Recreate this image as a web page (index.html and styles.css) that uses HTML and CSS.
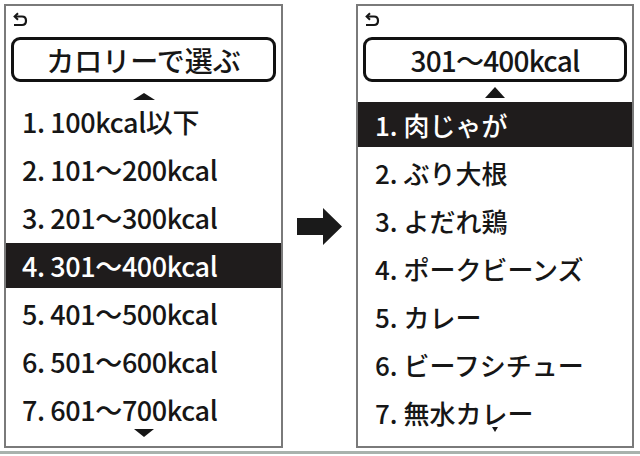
FILE: index.html
```html
<!DOCTYPE html>
<html lang="ja">
<head>
<meta charset="utf-8">
<title>カロリーで選ぶ</title>
<link rel="stylesheet" href="styles.css">
</head>
<body>
<div class="screen">
  <section class="panel">
    <div class="back">
      <svg width="16" height="15" viewBox="0 0 16 15"><path d="M3 4.5 H10 Q14 4.5 14 8.75 Q14 13 10 13 H2" fill="none" stroke="#161616" stroke-width="2.2"/><path d="M6 1.2 L2.6 4.5 L6 7.8" fill="none" stroke="#161616" stroke-width="2"/></svg>
    </div>
    <div class="title">カロリーで選ぶ</div>
    <div class="up"><span class="tri-up wide"></span></div>
    <ol class="list">
      <li>1. 100kcal以下</li>
      <li>2. 101～200kcal</li>
      <li>3. 201～300kcal</li>
      <li class="sel">4. 301～400kcal</li>
      <li>5. 401～500kcal</li>
      <li>6. 501～600kcal</li>
      <li>7. 601～700kcal</li>
    </ol>
    <div class="down"><span class="tri-down big"></span></div>
  </section>

  <div class="arrow">
    <svg width="45" height="37" viewBox="0 0 45 37"><polygon points="0,10 26,10 26,0 45,18.5 26,37 26,27 0,27" fill="#1a1a1a"/></svg>
  </div>

  <section class="panel">
    <div class="back">
      <svg width="16" height="15" viewBox="0 0 16 15"><path d="M3 4.5 H10 Q14 4.5 14 8.75 Q14 13 10 13 H2" fill="none" stroke="#161616" stroke-width="2.2"/><path d="M6 1.2 L2.6 4.5 L6 7.8" fill="none" stroke="#161616" stroke-width="2"/></svg>
    </div>
    <div class="title title-r">301～400kcal</div>
    <div class="up up-r"><span class="tri-up tall"></span></div>
    <ol class="list list-r">
      <li class="sel">1. 肉じゃが</li>
      <li>2. ぶり大根</li>
      <li>3. よだれ鶏</li>
      <li>4. ポークビーンズ</li>
      <li>5. カレー</li>
      <li>6. ビーフシチュー</li>
      <li>7. 無水カレー</li>
    </ol>
    <div class="down down-r"><span class="tri-down small"></span></div>
  </section>
</div>
<div class="rule"></div>
</body>
</html>
```

FILE: styles.css
```css
html, body {
  margin: 0;
  padding: 0;
  background: #ffffff;
}

body {
  width: 640px;
  height: 456px;
  overflow: hidden;
  font-family: "Noto Sans CJK JP", "Noto Sans", sans-serif;
  font-weight: 500;
  color: #161616;
}

.screen {
  display: flex;
  align-items: center;
  padding: 4px 0 0 4px;
}

.panel {
  box-sizing: border-box;
  width: 279px;
  height: 444px;
  border: 2px solid #7a7a7a;
  display: flex;
  flex-direction: column;
}

.panel + .arrow + .panel {
  width: 278px;
}

.arrow {
  width: 73px;
  display: flex;
  justify-content: center;
  align-items: center;
}

.arrow svg {
  display: block;
}

.back {
  box-sizing: border-box;
  height: 31px;
  padding: 6px 0 0 6px;
}

.back svg {
  display: block;
}

.title {
  box-sizing: border-box;
  height: 45px;
  margin: 0 5px;
  border: 3px solid #111111;
  border-radius: 9px;
  padding-top: 1px;
  font-size: 28px;
  line-height: 38px;
  text-align: center;
  white-space: nowrap;
}

.title-r {
  letter-spacing: -0.8px;
}

.up {
  height: 17px;
  display: flex;
  justify-content: center;
  align-items: flex-start;
  padding-top: 11px;
  box-sizing: border-box;
}

.up-r {
  height: 20px;
  padding-top: 5px;
}

.tri-up {
  width: 0;
  height: 0;
  border-style: solid;
  border-color: transparent transparent #161616 transparent;
}

.tri-up.wide {
  border-width: 0 11px 7px 11px;
}

.tri-up.tall {
  border-width: 0 10px 11px 10px;
}

.list {
  list-style: none;
  margin: 0;
  padding: 0;
  display: flex;
  flex-direction: column;
  gap: 3px;
}

.list li {
  height: 45px;
  padding-left: 16px;
  font-size: 27px;
  line-height: 45px;
  letter-spacing: -0.4px;
  white-space: nowrap;
}

.list-r li {
  padding-left: 17px;
  font-size: 26px;
  letter-spacing: 0;
}

.list li.sel {
  background: #1f1c1c;
  color: #ffffff;
}

.down {
  display: flex;
  justify-content: center;
  margin-top: -3px;
}

.down-r {
  margin-top: -8px;
}

.tri-down {
  width: 0;
  height: 0;
  border-style: solid;
  border-color: #161616 transparent transparent transparent;
}

.tri-down.big {
  border-width: 8px 10.5px 0 10.5px;
}

.tri-down.small {
  border-width: 5px 3px 0 3px;
}

.rule {
  margin-top: 3px;
  height: 3px;
  background: #a9b2ad;
}
```
